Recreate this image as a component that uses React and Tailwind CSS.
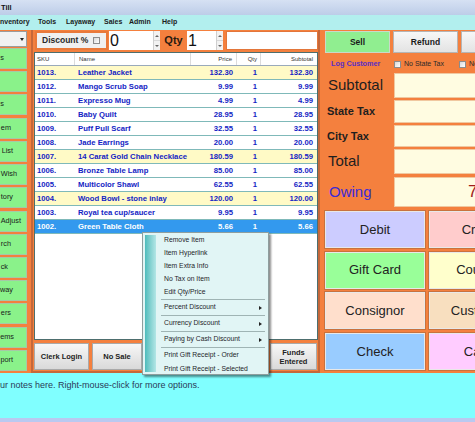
import React from 'react';

const leftButtons = [
  ['s', 22], ['', 0], ['s', 22], ['em', 15], ['List', 13], ['Wish', 9], ['tory', 13],
  ['Adjust', 5], ['rch', 15], ['ck', 18], ['way', 13], ['ers', 15], ['ems', 12], ['port', 13],
];

const rows = [
  ['1013.', 'Leather Jacket', '132.30', '1', '132.30', 'y'],
  ['1012.', 'Mango Scrub Soap', '9.99', '1', '9.99', 'w'],
  ['1011.', 'Expresso Mug', '4.99', '1', '4.99', 'w'],
  ['1010.', 'Baby Quilt', '28.95', '1', '28.95', 'w'],
  ['1009.', 'Puff Pull Scarf', '32.55', '1', '32.55', 'w'],
  ['1008.', 'Jade Earrings', '20.00', '1', '20.00', 'w'],
  ['1007.', '14 Carat Gold Chain Necklace', '180.59', '1', '180.59', 'y'],
  ['1006.', 'Bronze Table Lamp', '85.00', '1', '85.00', 'w'],
  ['1005.', 'Multicolor Shawl', '62.55', '1', '62.55', 'w'],
  ['1004.', 'Wood Bowl - stone inlay', '120.00', '1', '120.00', 'y'],
  ['1003.', 'Royal tea cup/saucer', '9.95', '1', '9.95', 'w'],
  ['1002.', 'Green Table Cloth', '5.66', '1', '5.66', 's'],
];

function Spin() {
  return (
    <div className="w-[7px] h-full flex flex-col border-l border-[#cfcfcf] bg-[#f2f2f2]">
      <div className="flex-1 flex items-center justify-center border-b border-[#d8d8d8]">
        <div className="w-0 h-0 border-l-[2px] border-r-[2px] border-b-[2px] border-l-transparent border-r-transparent border-b-[#666]" />
      </div>
      <div className="flex-1 flex items-center justify-center">
        <div className="w-0 h-0 border-l-[2px] border-r-[2px] border-t-[2px] border-l-transparent border-r-transparent border-t-[#666]" />
      </div>
    </div>
  );
}

function Check() {
  return <span className="inline-block w-[7px] h-[7px] border border-[#8c8c8c] bg-gradient-to-br from-[#d8d8d8] to-[#ffffff]" />;
}

function GrayBtn({ children, w }) {
  return (
    <div
      className="h-full flex items-center justify-center text-center leading-[9px] text-[7.5px] font-bold text-[#222] bg-gradient-to-b from-[#f7f7f7] to-[#d9d9d9] border border-[#a9a9a9]"
      style={{ width: w }}
    >
      {children}
    </div>
  );
}

function MenuItem({ label, h, arrow }) {
  return (
    <div className="flex items-center pl-[21px] pr-[6px] text-[6.8px] text-[#1e1e2a] whitespace-nowrap" style={{ height: h }}>
      <span className="flex-1">{label}</span>
      {arrow && (
        <div className="w-0 h-0 border-t-[2px] border-b-[2px] border-l-[3px] border-t-transparent border-b-transparent border-l-[#222]" />
      )}
    </div>
  );
}

function Sep() {
  return <div className="h-[1px] ml-[18px] mr-[3px] bg-[#9fb4b4]" />;
}

function PayBtn({ bg, children }) {
  return (
    <div className={`h-[37px] ${bg} border border-[#e8e8e8] shadow-[0_0_0_1px_#c8723e] flex items-center justify-center`}>
      {children}
    </div>
  );
}

export default function App() {
  return (
    <div className="relative w-[475px] h-[422px] overflow-hidden bg-[#f4803e] font-['Liberation_Sans',Arial,sans-serif]">
      {/* title bar */}
      <div className="h-[15px] bg-gradient-to-b from-[#d6e1f3] to-[#bdcde8] flex items-center pl-[1px] text-[7.5px] font-bold text-[#111]">
        Till
      </div>
      {/* menu bar */}
      <div className="h-[15px] bg-[#b2efee] flex items-center text-[7px] font-bold text-[#1c1c1c] whitespace-nowrap">
        <span className="w-[38px]">nventory</span>
        <span className="w-[28px]">Tools</span>
        <span className="w-[38px]">Layaway</span>
        <span className="w-[25px]">Sales</span>
        <span className="w-[33px]">Admin</span>
        <span>Help</span>
      </div>

      {/* main area */}
      <div className="flex h-[343px]">
        {/* left column */}
        <div className="w-[31px] flex flex-col pt-[1px] pb-[2px]">
          <div className="w-[27px] h-[16px] bg-[#f2f2f2] border border-l-0 border-[#9c9c9c] flex items-center justify-end pr-[2px]">
            <div className="w-0 h-0 border-l-[2px] border-r-[2px] border-t-[3px] border-l-transparent border-r-transparent border-t-[#222]" />
          </div>
          <div className="flex-1 flex flex-col justify-between mt-[1px] w-[27px]">
            {leftButtons.map(([t, pr], i) => (
              <div
                key={i}
                className="h-[21px] bg-[#8af28a] border border-l-0 border-[#a6c9a6] flex items-center justify-end whitespace-nowrap text-[7.3px] text-[#1a1a1a]"
                style={{ paddingRight: pr }}
              >
                {t}
              </div>
            ))}
          </div>
        </div>

        {/* middle column */}
        <div className="w-[289px] flex flex-col border-l-2 border-r-2 border-b-2 border-[#c5683a] pt-[1px] pb-[1px]">
          {/* top bar */}
          <div className="flex h-[19px]">
            <div className="ml-[2px] w-[73px] h-full bg-[#f0f0f0] border-2 border-[#e9793a] flex items-center pl-[5px] gap-[5px]">
              <span className="text-[8.5px] font-bold text-[#2a2a2a]">Discount %</span>
              <Check />
            </div>
            <div className="ml-[1px] w-[51px] h-full bg-white flex">
              <div className="flex-1 text-[16px] leading-[19px] pl-[1px] text-[#111]">0</div>
              <Spin />
            </div>
            <div className="w-[27px] h-full flex items-center justify-center text-[11px] font-bold text-[#2a1a10]">Qty</div>
            <div className="w-[36px] h-full bg-white flex">
              <div className="flex-1 text-[16px] leading-[19px] pl-[1px] text-[#111]">1</div>
              <Spin />
            </div>
            <div className="ml-[3px] w-[92px] h-full bg-white border border-[#e3763a]" />
          </div>

          {/* table */}
          <div className="mt-[2px] ml-[1px] w-[284px] h-[288px] bg-white border border-[#4d6e6e] flex flex-col">
            <div className="flex h-[13px] border-b border-[#9ab] text-[6px] text-[#333] items-center">
              <div className="w-[40px] pl-[2px] border-r border-[#dcdcdc] h-full flex items-center">SKU</div>
              <div className="w-[116px] pl-[4px] border-r border-[#dcdcdc] h-full flex items-center">Name</div>
              <div className="w-[46px] pr-[4px] border-r border-[#dcdcdc] h-full flex items-center justify-end">Price</div>
              <div className="w-[24px] pr-[3px] border-r border-[#dcdcdc] h-full flex items-center justify-end">Qty</div>
              <div className="w-[56px] pr-[4px] h-full flex items-center justify-end">Subtotal</div>
            </div>
            {rows.map((r, i) => {
              const bg = r[5] === 'y' ? 'bg-[#fffac6]' : r[5] === 's' ? 'bg-[#3399ee]' : 'bg-white';
              const tc = r[5] === 's' ? 'text-white' : 'text-[#1424c4]';
              return (
                <div key={i} className={`flex h-[14px] border-b border-[#7fb9b9] items-center text-[7.7px] font-bold whitespace-nowrap ${bg} ${tc}`}>
                  <div className="w-[40px] pl-[2px]">{r[0]}</div>
                  <div className="w-[116px] pl-[3px]">{r[1]}</div>
                  <div className="w-[46px] pr-[4px] text-right">{r[2]}</div>
                  <div className="w-[24px] pr-[4px] text-right">{r[3]}</div>
                  <div className="w-[56px] pr-[4px] text-right">{r[4]}</div>
                </div>
              );
            })}
          </div>

          {/* bottom buttons */}
          <div className="mt-[3px] ml-[1px] h-[27px] flex">
            <GrayBtn w={55}>Clerk Login</GrayBtn>
            <div className="w-[3px]" />
            <GrayBtn w={50}>No Sale</GrayBtn>
            <div className="w-[3px]" />
            <GrayBtn w={60} />
            <div className="w-[2px]" />
            <GrayBtn w={60} />
            <div className="w-[3px]" />
            <GrayBtn w={47}>
              Funds
              <br />
              Entered
            </GrayBtn>
          </div>
        </div>

        {/* right column */}
        <div className="w-[155px] overflow-hidden">
          <div className="w-[240px] flex flex-col pt-[1px]">
            <div className="flex h-[22px] pl-[5px] gap-[3px]">
              <div className="w-[65px] h-full bg-[#90ee90] border border-[#c9d9c9] flex items-center justify-center text-[8.5px] font-bold text-[#1a1a1a]">Sell</div>
              <div className="w-[65px] h-full bg-gradient-to-b from-[#f7f7f7] to-[#e3e3e3] border border-[#b5b5b5] flex items-center justify-center text-[8.5px] font-bold text-[#1a1a1a]">Refund</div>
              <div className="w-[65px] h-full bg-gradient-to-b from-[#f7f7f7] to-[#e3e3e3] border border-[#b5b5b5] flex items-center justify-center text-[8.5px] font-bold text-[#1a1a1a]">Void</div>
            </div>
            <div className="mt-[3px] h-[16px] flex items-center whitespace-nowrap">
              <span className="w-[74px] pl-[11px] text-[7.3px] font-bold text-[#5a2ec4]">Log Customer</span>
              <Check />
              <span className="ml-[3px] w-[55px] text-[7px] text-[#2a2a2a]">No State Tax</span>
              <Check />
              <span className="ml-[3px] text-[7px] text-[#2a2a2a]">No City Tax</span>
            </div>
            <div className="mt-[1px] h-[25px] flex items-center">
              <span className="w-[74px] pl-[8px] text-[15px] text-[#1e1e1e]">Subtotal</span>
              <div className="flex-1 h-full bg-[#fffce1] border border-[#f0c8a0]" />
            </div>
            <div className="mt-[2px] h-[23px] flex items-center">
              <span className="w-[74px] pl-[7px] text-[11px] font-bold text-[#1e1e1e]">State Tax</span>
              <div className="flex-1 h-full bg-[#fffce1] border border-[#f0c8a0]" />
            </div>
            <div className="mt-[2px] h-[22px] flex items-center">
              <span className="w-[74px] pl-[7px] text-[11px] font-bold text-[#1e1e1e]">City Tax</span>
              <div className="flex-1 h-full bg-[#fffce1] border border-[#f0c8a0]" />
            </div>
            <div className="mt-[2px] h-[25px] flex items-center">
              <span className="w-[74px] pl-[8px] text-[15px] text-[#1e1e1e]">Total</span>
              <div className="flex-1 h-full bg-[#fffce1] border border-[#f0c8a0]" />
            </div>
            <div className="mt-[3px] h-[30px] flex items-center">
              <span className="w-[74px] pl-[9px] text-[15px] text-[#3b2bd6]">Owing</span>
              <div className="flex-1 h-full bg-[#fffce1] border border-[#f0c8a0] flex items-center pl-[73px] text-[17px] text-[#a01c1c]">
                741.62
              </div>
            </div>
            <div className="mt-[4px] ml-[5px] grid grid-cols-[100px_100px] gap-x-[4px] gap-y-[3.7px] text-[13px] text-[#222]">
              <PayBtn bg="bg-[#ccccff]">Debit</PayBtn>
              <PayBtn bg="bg-[#ffcccc]">Credit</PayBtn>
              <PayBtn bg="bg-[#99ff99]">Gift Card</PayBtn>
              <PayBtn bg="bg-[#ffffcc]">Coupon</PayBtn>
              <PayBtn bg="bg-[#ffdfcc]">Consignor</PayBtn>
              <PayBtn bg="bg-[#f8dfbf]">Customer</PayBtn>
              <PayBtn bg="bg-[#99ccff]">Check</PayBtn>
              <PayBtn bg="bg-[#ffccff]">Cash</PayBtn>
            </div>
          </div>
        </div>
      </div>

      {/* notes */}
      <div className="h-[45px] bg-[#80ffff] pt-[6px] text-[9px] text-[#2b3a58] whitespace-nowrap">
        ur notes here. Right-mouse-click for more options.
      </div>
      <div className="h-[4px] bg-[#b9c9f0]" />

      {/* context menu */}
      <div className="absolute left-[142px] top-[232px] w-[127px] h-[143px] bg-[#e1f5f5] border border-[#8e9e9e] shadow-[2px_2px_2px_rgba(0,0,0,0.45)] pt-[1px]">
        <div className="absolute left-[2px] top-[2px] bottom-[2px] w-[11px] bg-gradient-to-r from-[#4cbcbc] to-[#b2e6e6]" />
        <div className="relative">
          <MenuItem label="Remove Item" h={13} />
          <MenuItem label="Item Hyperlink" h={13} />
          <MenuItem label="Item Extra Info" h={13} />
          <MenuItem label="No Tax on Item" h={13} />
          <MenuItem label="Edit Qty/Price" h={13} />
          <Sep />
          <MenuItem label="Percent Discount" h={15} arrow />
          <Sep />
          <MenuItem label="Currency Discount" h={15} arrow />
          <Sep />
          <MenuItem label="Paying by Cash Discount" h={15} arrow />
          <Sep />
          <MenuItem label="Print Gift Receipt - Order" h={15} />
          <MenuItem label="Print Gift Receipt - Selected" h={12} />
        </div>
      </div>
    </div>
  );
}
